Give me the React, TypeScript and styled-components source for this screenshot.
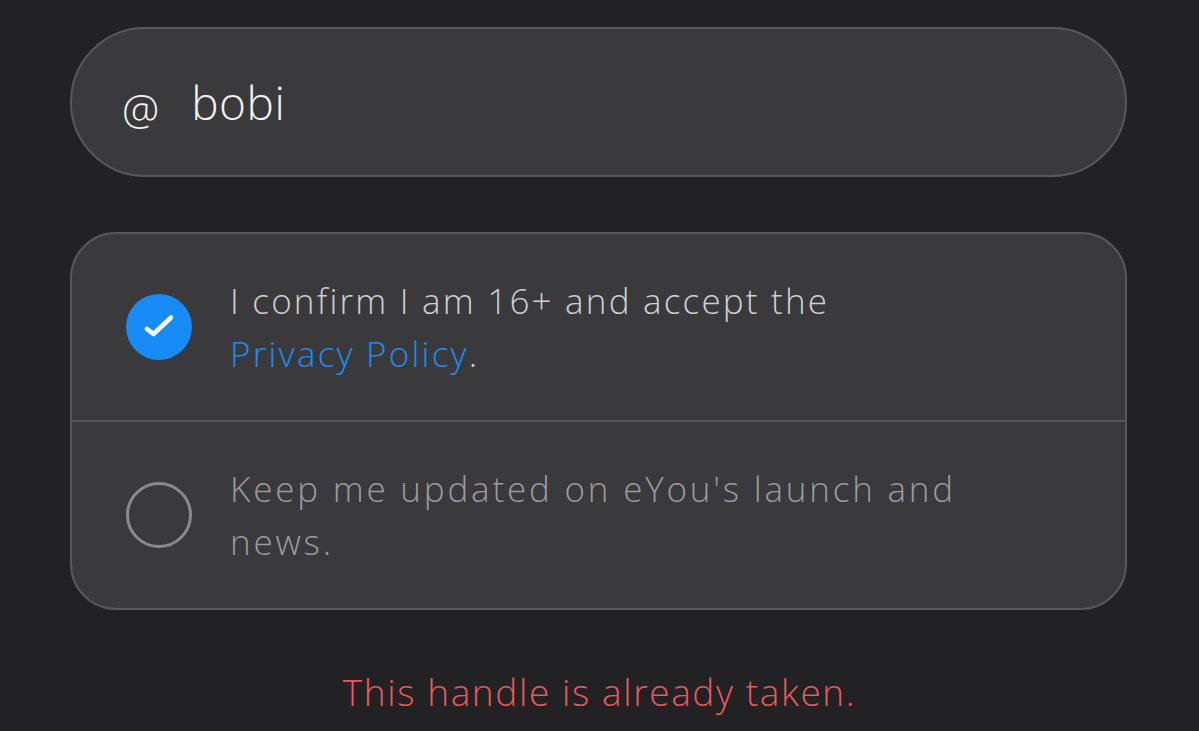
import { createGlobalStyle, styled } from 'styled-components';

const GlobalStyle = createGlobalStyle`
  html, body {
    margin: 0;
    padding: 0;
    background: #222224;
  }
  body {
    font-family: "Open Sans", Lato, sans-serif;
    font-weight: 300;
  }
`;

const App = () => {
  return (
    <>
      <GlobalStyle />
      <Page>
        <HandleField>
          <AtSign>@</AtSign>
          <HandleText>bobi</HandleText>
        </HandleField>
        <ConsentCard>
          <ConsentRow>
            <Check $checked>
              <svg width="32" height="32" viewBox="0 0 32 32" fill="none">
                <path
                  d="M4 18l6.5 5L28 6.5"
                  stroke="#fff"
                  strokeWidth="4.6"
                  strokeLinecap="round"
                  strokeLinejoin="round"
                />
              </svg>
            </Check>
            <ConsentText>
              I confirm I am 16+ and accept the
              <br />
              <PolicyLink>Privacy Policy</PolicyLink>.
            </ConsentText>
          </ConsentRow>
          <ConsentRow $divided>
            <Check />
            <ConsentText $muted>
              Keep me updated on eYou's launch and
              <br />
              news.
            </ConsentText>
          </ConsentRow>
        </ConsentCard>
        <ErrorText>This handle is already taken.</ErrorText>
      </Page>
    </>
  );
};

export default App;

const Page = styled.div`
  width: 1199px;
  height: 731px;
  box-sizing: border-box;
  padding: 27px 72px 0 70px;
  display: flex;
  flex-direction: column;
  overflow: hidden;
`;

const HandleField = styled.div`
  height: 150px;
  box-sizing: border-box;
  border: 2px solid #58585b;
  border-radius: 75px;
  background: #3a3a3c;
  display: flex;
  align-items: center;
  padding-left: 50px;
  gap: 32px;
  color: #f2f2f2;
`;

const AtSign = styled.span`
  font-size: 42px;
  margin-top: 12px;
`;

const HandleText = styled.span`
  font-size: 46px;
  letter-spacing: 0.5px;
`;

const ConsentCard = styled.div`
  margin-top: 55px;
  height: 378px;
  box-sizing: border-box;
  border: 2px solid #58585b;
  border-radius: 46px;
  background: #3a3a3c;
  display: flex;
  flex-direction: column;
  overflow: hidden;
`;

const ConsentRow = styled.div<{ $divided?: boolean }>`
  flex: 1;
  display: flex;
  align-items: center;
  padding-left: 54px;
  gap: 38px;
  border-top: ${(p) => (p.$divided ? '2px solid #545457' : 'none')};
`;

const Check = styled.div<{ $checked?: boolean }>`
  width: 66px;
  height: 66px;
  flex-shrink: 0;
  box-sizing: border-box;
  border-radius: 50%;
  display: flex;
  align-items: center;
  justify-content: center;
  background: ${(p) => (p.$checked ? '#178bf6' : 'transparent')};
  border: ${(p) => (p.$checked ? 'none' : '3px solid #8a8a8c')};
`;

const ConsentText = styled.div<{ $muted?: boolean }>`
  font-size: 35px;
  line-height: 53px;
  letter-spacing: ${(p) => (p.$muted ? '2.8px' : '2.2px')};
  color: ${(p) => (p.$muted ? '#9b9b9d' : '#cfcfd1')};
`;

const PolicyLink = styled.span`
  color: #1c8cf2;
`;

const ErrorText = styled.div`
  margin-top: 56px;
  text-align: center;
  font-size: 37px;
  letter-spacing: 1.6px;
  color: #e8585e;
  padding-left: 2px;
`;
